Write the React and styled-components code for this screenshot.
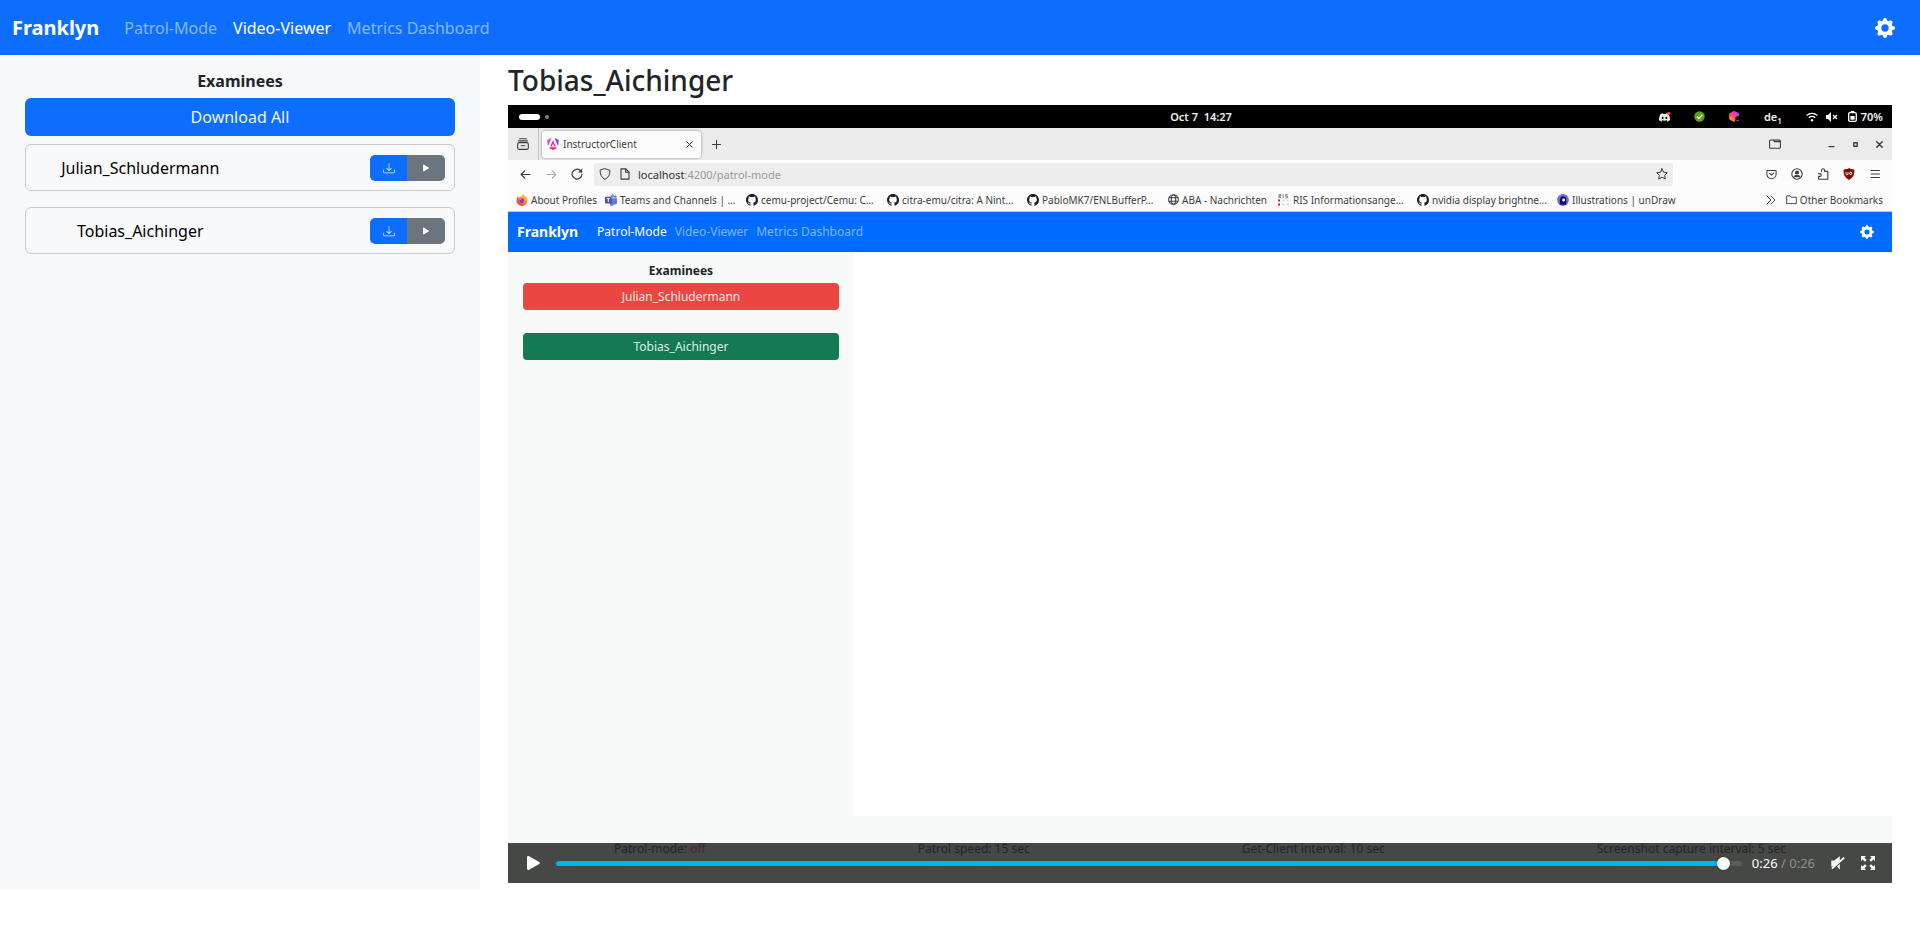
import React, { useState } from "react";
import styled, { createGlobalStyle } from "styled-components";
import { BsGearFill, BsDownload, BsPlayFill, BsDiscord, BsGithub } from "react-icons/bs";

const GlobalStyle = createGlobalStyle`
  *, *::before, *::after { box-sizing: border-box; }
  body {
    margin: 0;
    background: #fff;
    color: #212529;
    font: 16px/24px "Noto Sans", "Liberation Sans", sans-serif;
  }
  button { font: inherit; border: 0; margin: 0; padding: 0; background: none; color: inherit; cursor: pointer; }
  a { color: inherit; text-decoration: none; }
  svg { display: block; flex: none; }
`;

/* ---------- application shell ---------- */

const Navbar = styled.header`
  display: flex;
  align-items: center;
  height: ${(p) => (p.$small ? 40 : 55)}px;
  padding: ${(p) => (p.$small ? "0 18px 0 9px" : "0 25px 0 12px")};
  background: ${(p) => (p.$small ? "#006cff" : "#0d6efd")};
  color: #fff;
`;

const Brand = styled.a`
  margin-right: ${(p) => (p.$small ? 19 : 25)}px;
  font-size: ${(p) => (p.$small ? 14 : 20)}px;
  font-weight: 700;
`;

const NavLinks = styled.nav`
  display: flex;
  flex: 1;
  gap: ${(p) => (p.$small ? 8 : 16)}px;
  font-size: ${(p) => (p.$small ? 12 : 16)}px;
`;

const NavLink = styled.a`
  color: ${(p) => (p.$active ? "#fff" : "rgba(255, 255, 255, 0.5)")};
`;

const Columns = styled.div`
  display: grid;
  grid-template-columns: 1fr 3fr;
`;

const Sidebar = styled.aside`
  padding: 14px 25px;
  background: #f8f9fb;
`;

const SidebarTitle = styled.h2`
  margin: 0 0 5px;
  font-size: 16px;
  line-height: 24px;
  text-align: center;
`;

const DownloadAll = styled.button`
  display: block;
  width: 100%;
  height: 38px;
  margin-bottom: 8px;
  border-radius: 6px;
  background: #0d6efd;
  color: #f0f5ff;
`;

const ExamineeList = styled.ul`
  display: grid;
  gap: 16px;
  margin: 0;
  padding: 0;
  list-style: none;
`;

const ExamineeCard = styled.li`
  display: grid;
  grid-template-columns: 6fr 5fr;
  align-items: center;
  height: 47px;
  padding-right: 9px;
  border: 1px solid #c9cccf;
  border-radius: 6px;
  color: #000;
`;

const ExamineeName = styled.span`
  text-align: center;
`;

const ButtonGroup = styled.div`
  display: flex;
  justify-self: end;
  width: 75px;
  height: 26px;
  overflow: hidden;
  border-radius: 5px;
`;

const GroupButton = styled.button`
  display: flex;
  flex: 1;
  align-items: center;
  justify-content: center;
  background: ${(p) => (p.$secondary ? "#6c757d" : "#0d6efd")};
  color: ${(p) => (p.$secondary ? "#fff" : "#dbe8ff")};
`;

const Main = styled.main`
  min-width: 0;
  padding: 8px 28px 6px;
`;

const Title = styled.h1`
  margin: 0 0 8px;
  font-size: 28px;
  font-weight: 500;
  line-height: 34px;
`;

/* ---------- video player ---------- */

const Player = styled.section`
  position: relative;
  display: flex;
  flex-direction: column;
  aspect-ratio: 692 / 389;
  overflow: hidden;
  background: #fff;
`;

const Controls = styled.div`
  position: absolute;
  inset: auto 0 0;
  display: flex;
  align-items: center;
  height: 40px;
  padding: 0 17px 0 18px;
  background: rgba(36, 37, 36, 0.84);
  color: #fff;
`;

const ControlButton = styled.button`
  margin-left: ${(p) => p.$before || 0}px;
`;

const Scrubber = styled.input`
  flex: 1;
  height: 14px;
  margin: 0 10px 0 14px;
  appearance: none;
  background: none;
  &::-webkit-slider-runnable-track {
    height: 5px;
    border-radius: 3px;
    background: linear-gradient(to right, #00b3f5 var(--played), #5b5c5b var(--played));
  }
  &::-webkit-slider-thumb {
    appearance: none;
    width: 13px;
    height: 13px;
    margin-top: -4px;
    border-radius: 50%;
    background: #fff;
    box-shadow: 0 0 3px rgba(0, 0, 0, 0.4);
  }
`;

const Time = styled.span`
  font-size: 13px;
  color: ${(p) => (p.$muted ? "#8f908f" : "#fff")};
  white-space: pre;
`;

/* ---------- recorded desktop ---------- */

const SystemBar = styled.div`
  display: grid;
  grid-template-columns: 1fr auto 1fr;
  align-items: center;
  height: 23px;
  padding: 0 9px 0 11px;
  background: #000;
  color: #f2f2f2;
  font-size: 11px;
  font-weight: 600;
  line-height: 15px;
  white-space: pre;
`;

const Workspaces = styled.div`
  display: flex;
  align-items: center;
  gap: 5px;
  &::before { content: ""; width: 21px; height: 6px; border-radius: 3px; background: #fff; }
  &::after { content: ""; width: 4px; height: 4px; border-radius: 2px; background: #808080; }
`;

const Tray = styled.div`
  display: flex;
  align-items: center;
  justify-content: flex-end;
`;

const TrayItem = styled.span`
  display: flex;
  align-items: center;
  margin-left: ${(p) => p.$before}px;
`;

const Layout = styled.sub`
  align-self: flex-end;
  font-size: 8px;
  line-height: 7px;
`;

const TabStrip = styled.div`
  display: flex;
  align-items: center;
  height: 32px;
  padding-right: 1px;
  background: #ebebeb;
  color: #3c3c3c;
`;

const TabListCell = styled.div`
  display: flex;
  align-items: center;
  justify-content: center;
  width: 31px;
  height: 100%;
  border-right: 1px solid #c4c4c4;
`;

const Tab = styled.div`
  display: flex;
  align-items: center;
  width: 159px;
  height: 27px;
  margin-left: 3px;
  padding: 0 8px 0 5px;
  border-radius: 3px;
  background: #fcfcfc;
  box-shadow: 0 0 3px rgba(0, 0, 0, 0.4);
  font-size: 10px;
  line-height: 14px;
`;

const TabLabel = styled.span`
  flex: 1;
  margin-left: 4px;
`;

const IconButton = styled.button`
  display: flex;
  align-items: center;
  justify-content: center;
  width: ${(p) => p.$w || 26}px;
  height: 26px;
  color: ${(p) => (p.$dim ? "#a9a9a9" : "#3c3c3c")};
`;

const WindowButtons = styled.div`
  display: flex;
  gap: 31px;
  margin-left: auto;
`;

const Row = styled.div`
  display: flex;
`;

const Toolbar = styled.div`
  display: flex;
  align-items: center;
  height: 28px;
  padding: 0 4px;
  background: #fcfcfc;
`;

const AddressBar = styled.div`
  display: flex;
  flex: 1;
  align-items: center;
  height: 23px;
  margin: 0 85px 0 4px;
  padding: 0 5px;
  border-radius: 3px;
  background: #ededed;
  color: #3c3c3c;
  font-size: 11px;
  line-height: 15px;
`;

const Address = styled.span`
  flex: 1;
  margin-left: 7px;
  color: #999;
`;

const Host = styled.span`
  color: #333;
`;

const PageIcon = styled.span`
  margin-left: 8px;
`;

const Bookmarks = styled.div`
  display: flex;
  align-items: center;
  height: 24px;
  padding: 0 9px 0 8px;
  border-bottom: 1px solid #a9c8f5;
  background: #fcfcfc;
  color: #3c3c3c;
  font-size: 10px;
  line-height: 14px;
  white-space: nowrap;
`;

const Bookmark = styled.a`
  display: flex;
  align-items: center;
  gap: 3px;
  width: ${(p) => (p.$w ? p.$w + "px" : "auto")};
  margin-left: ${(p) => (p.$last ? "10px" : 0)};
`;

const MoreBookmarks = styled.button`
  margin-left: auto;
`;

/* ---------- recorded web page ---------- */

const PageBody = styled.div`
  display: grid;
  flex: 1;
  grid-template-columns: 1fr 3fr;
`;

const PageSidebar = styled.div`
  display: flex;
  flex-direction: column;
  gap: 23px;
  padding: 10px 15px;
  background: #f8faf9;
  font-size: 12px;
`;

const PageHeading = styled.h3`
  margin: 0 0 -20px;
  font-size: 12px;
  line-height: 18px;
  text-align: center;
`;

const StatusButton = styled.button`
  height: 27px;
  border-radius: 4px;
  background: ${(p) => (p.$online ? "#137a54" : "#ea4743")};
  color: ${(p) => (p.$online ? "#dcefe6" : "#fde4e2")};
`;

const PageFooter = styled.footer`
  display: flex;
  justify-content: space-around;
  height: 67px;
  padding-top: 24px;
  background: #f8faf9;
  font-size: 12px;
  line-height: 18px;
`;

const Off = styled.span`
  color: #dc3545;
`;

/* ---------- drawings ---------- */

const Line = ({ size = 12, w = 1, children, box = 12 }) => (
  <svg width={size} height={size} viewBox={`0 0 ${box} ${box}`} fill="none" stroke="currentColor" strokeWidth={w} strokeLinecap="round" strokeLinejoin="round">
    {children}
  </svg>
);

const TabListIcon = () => (
  <Line w={1.1}>
    <path d="M2.6 .8h6.8M1.6 2.9h8.8" />
    <rect x=".7" y="4.6" width="10.6" height="6.8" rx="1.4" />
    <path d="M4.2 7.8h3.6" />
  </Line>
);

const AngularIcon = () => (
  <svg width="12" height="12" viewBox="0 0 12 12">
    <defs>
      <linearGradient id="ng" x1="0" y1="0" x2="1" y2="0.4">
        <stop offset="0" stopColor="#f637c4" />
        <stop offset="1" stopColor="#c22ff5" />
      </linearGradient>
    </defs>
    <path d="M4.4 0 .3 1.9l.6 6.3z" fill="url(#ng)" />
    <path d="M7.6 0l4.1 1.9-.6 6.3z" fill="#8f2ff0" />
    <path d="M6 2.2 3.2 8.5h1.5L6 5.4l1.3 3.1h1.5z" fill="#f0287c" />
    <path d="M2.8 9.2h6.4l.5 1L6 12l-3.7-1.8z" fill="#ee2a5b" />
  </svg>
);

const CloseIcon = ({ size = 7, w = 1 }) => (
  <Line size={size} box={7} w={w}><path d="M.8.8l5.4 5.4M6.2.8.8 6.2" /></Line>
);

const PlusIcon = () => <Line size={9} box={9} w={1.1}><path d="M4.5.5v8M.5 4.5h8" /></Line>;

const FolderTabIcon = () => (
  <svg width="12" height="10" viewBox="0 0 12 10" fill="none" stroke="currentColor" strokeWidth="1.1">
    <rect x=".6" y="1" width="10.8" height="8.2" rx="1" />
    <path d="M4.6 1l.8 1.500h6" strokeWidth="1.4" />
  </svg>
);

const BackIcon = () => <Line size={11} w={1.3}><path d="M11 6H1.2M5.2 2 1.2 6l4 4" /></Line>;
const ForwardIcon = () => <Line size={11} w={1.1}><path d="M1 6h9.8M6.8 2l4 4-4 4" /></Line>;
const ReloadIcon = () => (
  <Line w={1.2}><path d="M10.9 6.2A4.9 4.9 0 1 1 9.3 2.5L10.6 3.9" /><path d="M11 .9v3.4H7.6z" fill="currentColor" strokeWidth=".4" /></Line>
);
const ShieldIcon = () => <Line w={1}><path d="M6 .7 10.9 2.4C11 6.4 9.6 9.5 6 11.4 2.4 9.5 1 6.4 1.1 2.4z" /></Line>;
const FileIcon = () => <Line w={1.1}><path d="M2 .9h4.8L10 4v7.1H2zM6.600 1v3.2H10" /></Line>;
const StarIcon = () => <Line w={1}><path d="M6 .8l1.6 3.4 3.7.5-2.7 2.6.7 3.7L6 9.2 2.7 11l.7-3.7L.7 4.7l3.7-.5z" /></Line>;
const PocketIcon = () => <Line size={11} w={1.1}><path d="M1 1.6h10v4a5 5 0 0 1-10 0zM3.7 4.6 6 6.8l2.3-2.2" /></Line>;
const AccountIcon = () => (
  <Line w={1.1}>
    <circle cx="6" cy="6" r="5.2" />
    <circle cx="6" cy="4.5" r="1.5" fill="currentColor" />
    <path d="M3.2 8.8c.2-1.8 5.4-1.8 5.6 0z" fill="currentColor" />
  </Line>
);
const PuzzleIcon = () => (
  <Line w={1.1}><path d="M4.6 3.4V2.2a1.5 1.5 0 0 1 3 0v1.2h3.2v7.8H1.6V8.4h1.3a1.4 1.4 0 0 0 0-2.8H1.6" /></Line>
);
const UblockIcon = () => (
  <svg width="12" height="12" viewBox="0 0 12 12">
    <path d="M6 0c1.5 1 3.2 1.4 5.4 1.5.2 5-1 8.2-5.400 10.500C1.600 9.700.400 6.500.600 1.500 2.800 1.400 4.500 1 6 0z" fill="#800f06" />
    <path d="M3 4.200v1.600a1 1 0 0 0 2 0V4.200M6.600 5.400a1.100 1.200 0 1 0 2.200 0 1.100 1.200 0 1 0-2.200 0" fill="none" stroke="#fff" strokeWidth=".9" />
  </svg>
);
const MenuIcon = () => <Line size={10} box={10} w={1}><path d="M1 1.500h8.500M1 5h8.500M1 8.500h8.500" /></Line>;
const ChevronsIcon = () => <Line size={10} box={10} w={1}><path d="M1 1l4 4-4 4M5 1l4 4-4 4" /></Line>;
const FolderIcon = () => <Line size={11} w={1}><path d="M.7 10V2h3.800l1.200 1.500h5.600V10.500H.7z" /></Line>;
const GlobeIcon = () => (
  <Line size={11} w={1.1}>
    <circle cx="6" cy="6" r="5.300" />
    <ellipse cx="6" cy="6" rx="2.400" ry="5.300" />
    <path d="M1.300 4.200h9.400M1.300 7.800h9.400" />
  </Line>
);

const FirefoxIcon = () => (
  <svg width="12" height="12" viewBox="0 0 12 12">
    <defs>
      <linearGradient id="fx" x1=".9" y1="0" x2=".2" y2="1">
        <stop offset="0" stopColor="#ffe14a" />
        <stop offset=".5" stopColor="#ff8a1e" />
        <stop offset="1" stopColor="#f5275e" />
      </linearGradient>
    </defs>
    <path d="M1.500 2.500 3 3.400C4 2.600 5 2.500 5.600 2.500 5.900 1.400 6.500.6 7.400 0c.3 1.600 4.100 2.400 4.100 6.400A5.500 5.500 0 0 1 .5 6.500C.5 5 .9 3.600 1.500 2.500z" fill="url(#fx)" />
    <circle cx="5.800" cy="6.600" r="2.300" fill="#7a3fd0" />
    <path d="M3 4.600c1-.6 1.800-.4 2.800.4L4.600 6z" fill="#ff9a28" />
  </svg>
);
const TeamsIcon = () => (
  <svg width="12" height="12" viewBox="0 0 12 12">
    <circle cx="7.400" cy="2" r="1.700" fill="#7b83eb" />
    <circle cx="10.400" cy="2.600" r="1.200" fill="#5059c9" />
    <path d="M5 4.200h7v4.300a2 2 0 0 1-2 2H9a3 3 0 0 1-4 .8z" fill="#6a72dc" />
    <rect x="0" y="2.800" width="6.600" height="6.600" rx=".6" fill="#464eb8" />
    <path d="M1.700 4.600h3.200M3.300 4.600V8" stroke="#fff" strokeWidth="1" />
  </svg>
);
const RisIcon = () => (
  <svg width="12" height="12" viewBox="0 0 12 12">
    <path d="M1 4.200V.6h1.800v1.600H1l2 2M5.200.2v4M9.900.7H7.600v1.600h2v1.600H7.300" fill="none" stroke="#777" strokeWidth=".9" />
    <path d="M0 5.500h2v2H0zM0 9.600h2v2H0z" fill="#c22a1c" />
    <path d="M4.400 5.500h2v2h-2zM4.400 9.600h2v2h-2zM8.800 5.500h2v2h-2zM8.800 9.600h2v2h-2z" fill="#d6d6d6" />
  </svg>
);
const UnDrawIcon = () => (
  <svg width="12" height="12" viewBox="0 0 12 12">
    <circle cx="6" cy="6" r="5.900" fill="#6c63ff" />
    <path d="M2.900 10.600C2.600 5 3.400 2.200 6.200 2.200s3.500 3 2.900 8.600z" fill="#17172e" />
    <circle cx="6.600" cy="6" r="1.400" fill="#fff" />
  </svg>
);

const CheckBadge = () => (
  <svg width="11" height="11" viewBox="0 0 11 11">
    <circle cx="5.500" cy="5.500" r="5.200" fill="#5aa321" />
    <path d="M3 5.600l1.900 1.900 3.300-3.600" fill="none" stroke="#fff" strokeWidth="1.400" />
  </svg>
);
const DiscordBadge = () => (
  <svg width="12" height="12" viewBox="0 0 12 12">
    <BsDiscord size={11} y={1} color="#eee" />
    <circle cx="9.800" cy="2.400" r="1.700" fill="#e8503f" />
  </svg>
);
const ToolboxIcon = () => (
  <svg width="11" height="11" viewBox="0 0 11 11">
    <path d="M0 2.800 4.800 0l5 2.200v2.600L6.500 6v2.500l-1 2.500L.6 8.400z" fill="#ff4f5e" />
    <path d="M3.400.8 4.800 0l5 2.200v2.600L7 5.400z" fill="#c23df0" />
    <path d="M.1 4.500 4.500 6l1 5L.6 8.400z" fill="#ff7a3a" />
    <path d="M7.500 9.300h2" stroke="#999" />
  </svg>
);
const WifiIcon = () => (
  <svg width="12" height="10" viewBox="0 0 12 10" fill="none" stroke="#fff" strokeWidth="1.300">
    <path d="M.6 3.600a7.600 7.600 0 0 1 10.800 0M2.800 5.800a4.600 4.600 0 0 1 6.400 0" />
    <circle cx="6" cy="8.200" r="1.200" fill="#fff" stroke="none" />
  </svg>
);
const MutedIcon = () => (
  <svg width="12" height="10" viewBox="0 0 12 10">
    <path d="M0 3h2l3-3v10L2 7H0z" fill="#fff" />
    <path d="M7 3l4 4M11 3 7 7" stroke="#fff" strokeWidth="1.400" />
  </svg>
);
const BatteryIcon = () => (
  <svg width="9" height="11" viewBox="0 0 9 11">
    <path d="M2.700 0h3.600v1.500H2.700z" fill="#fff" />
    <rect x=".7" y="1.700" width="7.600" height="8.600" rx="1.200" fill="none" stroke="#fff" strokeWidth="1.300" />
    <path d="M2.400 5h4.200v3.700H2.400z" fill="#fff" />
  </svg>
);

const PlayIcon = () => (
  <svg width="16" height="14" viewBox="0 0 16 14" fill="#fff">
    <path d="M1 1.200C1 .3 1.900-.2 2.700.1L13.200 6c.8.500.8 1.500 0 2L2.700 13.900C1.900 14.200 1 13.700 1 12.800z" />
  </svg>
);
const VolumeOffIcon = () => (
  <svg width="14" height="14" viewBox="0 0 14 14">
    <path d="M.3 4.500h2.900L8.800.2v4.300L3 10.500H.3z" fill="#fff" />
    <path d="M6 10.800 8.800 8v5.400z" fill="#fff" />
    <path d="M.9 12.600 13.200 1.600" stroke="#fff" strokeWidth="1.800" />
  </svg>
);
const FullscreenIcon = () => (
  <svg width="14" height="14" viewBox="0 0 14 14" fill="#fff">
    <path d="M0 0h5L3.400 1.700 5.700 4 4 5.700 1.700 3.400 0 5zM14 0v5l-1.700-1.600L10 5.700 8.300 4l2.300-2.300L9 0zM0 14V9l1.700 1.600L4 8.300 5.700 10l-2.300 2.300L5 14zM14 14H9l1.600-1.700L8.300 10 10 8.300l2.300 2.300L14 9z" />
  </svg>
);

/* ---------- data ---------- */

const PAGES = ["Patrol-Mode", "Video-Viewer", "Metrics Dashboard"];
const EXAMINEES = ["Julian_Schludermann", "Tobias_Aichinger"];

const GithubIcon = () => <BsGithub size={12} color="#1b1f23" />;

const BOOKMARKS = [
  { label: "About Profiles", icon: <FirefoxIcon />, width: 89 },
  { label: "Teams and Channels | …", icon: <TeamsIcon />, width: 141 },
  { label: "cemu-project/Cemu: C…", icon: <GithubIcon />, width: 141 },
  { label: "citra-emu/citra: A Nint…", icon: <GithubIcon />, width: 140 },
  { label: "PabloMK7/ENLBufferP…", icon: <GithubIcon />, width: 141 },
  { label: "ABA - Nachrichten", icon: <GlobeIcon />, width: 110 },
  { label: "RIS Informationsange…", icon: <RisIcon />, width: 139 },
  { label: "nvidia display brightne…", icon: <GithubIcon />, width: 140 },
  { label: "Illustrations | unDraw", icon: <UnDrawIcon />, width: 120 },
];

/* ---------- components ---------- */

function TopNav({ active, small }) {
  return (
    <Navbar $small={small}>
      <Brand href="#" $small={small}>Franklyn</Brand>
      <NavLinks $small={small}>
        {PAGES.map((page) => (
          <NavLink key={page} href="#" $active={page === active}>{page}</NavLink>
        ))}
      </NavLinks>
      <button aria-label="Settings"><BsGearFill size={small ? 14 : 20} /></button>
    </Navbar>
  );
}

function BrowserChrome() {
  return (
    <>
      <SystemBar>
        <Workspaces />
        <span>Oct 7  14:27</span>
        <Tray>
          <TrayItem $before={0}><DiscordBadge /></TrayItem>
          <TrayItem $before={23}><CheckBadge /></TrayItem>
          <TrayItem $before={24}><ToolboxIcon /></TrayItem>
          <TrayItem $before={24}>de<Layout>1</Layout></TrayItem>
          <TrayItem $before={24}><WifiIcon /></TrayItem>
          <TrayItem $before={8}><MutedIcon /></TrayItem>
          <TrayItem $before={10}><BatteryIcon /></TrayItem>
          <TrayItem $before={4}>70%</TrayItem>
        </Tray>
      </SystemBar>
      <TabStrip>
        <TabListCell><TabListIcon /></TabListCell>
        <Tab>
          <AngularIcon />
          <TabLabel>InstructorClient</TabLabel>
          <button aria-label="Close tab"><CloseIcon /></button>
        </Tab>
        <IconButton $w={31} aria-label="New tab"><PlusIcon /></IconButton>
        <WindowButtons>
          <IconButton aria-label="List tabs"><FolderTabIcon /></IconButton>
          <Row>
            <IconButton $w={24} aria-label="Minimise"><Line size={7} box={7} w={1.4}><path d="M1 5.600h5" /></Line></IconButton>
            <IconButton $w={24} aria-label="Maximise"><Line size={5} box={5} w={1.4}><path d="M.8.8h3.400v3.400H.8z" /></Line></IconButton>
            <IconButton $w={24} aria-label="Close"><CloseIcon w={1.500} /></IconButton>
          </Row>
        </WindowButtons>
      </TabStrip>
      <Toolbar>
        <IconButton aria-label="Back"><BackIcon /></IconButton>
        <IconButton $dim aria-label="Forward"><ForwardIcon /></IconButton>
        <IconButton aria-label="Reload"><ReloadIcon /></IconButton>
        <AddressBar>
          <ShieldIcon />
          <PageIcon><FileIcon /></PageIcon>
          <Address><Host>localhost</Host>:4200/patrol-mode</Address>
          <StarIcon />
        </AddressBar>
        <IconButton aria-label="Pocket"><PocketIcon /></IconButton>
        <IconButton aria-label="Account"><AccountIcon /></IconButton>
        <IconButton aria-label="Extensions"><PuzzleIcon /></IconButton>
        <IconButton aria-label="Content blocker"><UblockIcon /></IconButton>
        <IconButton aria-label="Menu"><MenuIcon /></IconButton>
      </Toolbar>
      <Bookmarks>
        {BOOKMARKS.map(({ label, icon, width }) => (
          <Bookmark key={label} href="#" $w={width}>{icon}{label}</Bookmark>
        ))}
        <MoreBookmarks aria-label="More bookmarks"><ChevronsIcon /></MoreBookmarks>
        <Bookmark href="#" $last><FolderIcon />Other Bookmarks</Bookmark>
      </Bookmarks>
    </>
  );
}

function RecordedPage() {
  return (
    <>
      <TopNav small active="Patrol-Mode" />
      <PageBody>
        <PageSidebar>
          <PageHeading>Examinees</PageHeading>
          {EXAMINEES.map((name, i) => (
            <StatusButton key={name} $online={i === 1}>{name}</StatusButton>
          ))}
        </PageSidebar>
      </PageBody>
      <PageFooter>
        <span>Patrol-mode: <Off>off</Off></span>
        <span>Patrol speed: 15 sec</span>
        <span>Get-Client interval: 10 sec</span>
        <span>Screenshot capture interval: 5 sec</span>
      </PageFooter>
    </>
  );
}

function PlayerControls() {
  const [position, setPosition] = useState(99);
  return (
    <Controls>
      <ControlButton aria-label="Play"><PlayIcon /></ControlButton>
      <Scrubber
        type="range"
        min="0"
        max="100"
        step="0.1"
        value={position}
        aria-label="Seek"
        style={{ "--played": `${position - 1}%` }}
        onChange={(e) => setPosition(Number(e.target.value))}
      />
      <Time>0:26</Time>
      <Time $muted> / 0:26</Time>
      <ControlButton $before={16} aria-label="Unmute"><VolumeOffIcon /></ControlButton>
      <ControlButton $before={16} aria-label="Fullscreen"><FullscreenIcon /></ControlButton>
    </Controls>
  );
}

export default function App() {
  return (
    <>
      <GlobalStyle />
      <TopNav active="Video-Viewer" />
      <Columns>
        <Sidebar>
          <SidebarTitle>Examinees</SidebarTitle>
          <DownloadAll>Download All</DownloadAll>
          <ExamineeList>
            {EXAMINEES.map((name) => (
              <ExamineeCard key={name}>
                <ExamineeName>{name}</ExamineeName>
                <ButtonGroup>
                  <GroupButton aria-label={`Download ${name}`}><BsDownload size={12} /></GroupButton>
                  <GroupButton $secondary aria-label={`Play ${name}`}><BsPlayFill size={12} /></GroupButton>
                </ButtonGroup>
              </ExamineeCard>
            ))}
          </ExamineeList>
        </Sidebar>
        <Main>
          <Title>Tobias_Aichinger</Title>
          <Player aria-label="Screen recording">
            <BrowserChrome />
            <RecordedPage />
            <PlayerControls />
          </Player>
        </Main>
      </Columns>
    </>
  );
}
